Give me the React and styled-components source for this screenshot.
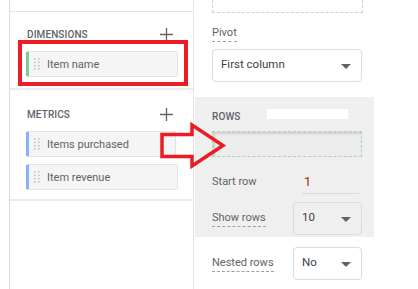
import React from 'react'
import styled, { createGlobalStyle } from "styled-components";

const GlobalStyle = createGlobalStyle`
  body {
    margin: 0;
    background: #fff;
    font-family: Roboto, "Noto Sans", sans-serif;
  }
`;

export default function App() {
  return (
    <>
      <GlobalStyle />
      <Page>
        <LeftPanel>
          <TopStub />
          <Group>
            <GroupHead>
              <GroupTitle>Dimensions</GroupTitle>
              <PlusIcon />
            </GroupHead>
            <Chip accent="#81c995">
              <Grip />
              Item name
            </Chip>
          </Group>
          <Group tall>
            <GroupHead>
              <GroupTitle>Metrics</GroupTitle>
              <PlusIcon />
            </GroupHead>
            <Chip accent="#8ab4f8" width={150}>
              <Grip />
              Items purchased
            </Chip>
            <Chip accent="#8ab4f8">
              <Grip />
              Item revenue
            </Chip>
          </Group>
        </LeftPanel>

        <RightPanel>
          <CutBox />
          <Field>
            <Label dashed>Pivot</Label>
            <Select width={150}>
              First column
              <Caret />
            </Select>
          </Field>

          <GrayBlock>
            <RowsHead>
              <GroupTitle>Rows</GroupTitle>
              <Redact />
            </RowsHead>
            <DropZone />
            <InlineRow>
              <Label>Start row</Label>
              <NumberInput>1</NumberInput>
            </InlineRow>
            <InlineRow select>
              <Label dashed>Show rows</Label>
              <Select width={69}>
                10
                <Caret />
              </Select>
            </InlineRow>
          </GrayBlock>

          <InlineRow select pad>
            <Label dashed>Nested rows</Label>
            <Select width={69}>
              No
              <Caret />
            </Select>
          </InlineRow>
        </RightPanel>

        <Annotations width="418" height="289" viewBox="0 0 418 289">
          <rect x="20" y="42" width="166" height="42" fill="none" stroke="#ec1c24" strokeWidth="4" />
          <polygon
            points="162,134.5 192,134.5 192,125 223,145.5 192,166 192,156.5 162,156.5"
            fill="none"
            stroke="#ec1c24"
            strokeWidth="3.5"
          />
        </Annotations>
      </Page>
    </>
  )
}

function Grip() {
  return (
    <GripSvg width="6" height="12" viewBox="0 0 6 12">
      {[1, 4.5, 8, 11].map((y) =>
        [1, 5].map((x) => <rect key={x + "-" + y} x={x - 1} y={y - 1} width="1.6" height="1.6" fill="#c4c4c4" />)
      )}
    </GripSvg>
  );
}

function PlusIcon() {
  return (
    <svg width="13" height="13" viewBox="0 0 13 13">
      <path d="M6.5 0 V13 M0 6.5 H13" stroke="#5f6368" strokeWidth="1.3" />
    </svg>
  );
}

function Caret() {
  return (
    <CaretSvg width="10" height="5" viewBox="0 0 10 5">
      <path d="M0 0 L10 0 L5 5 Z" fill="#5f6368" />
    </CaretSvg>
  );
}

const Page = styled.div`
  position: relative;
  width: 418px;
  height: 289px;
  overflow: hidden;
  display: flex;
`;

const Annotations = styled.svg`
  position: absolute;
  left: 0;
  top: 0;
  pointer-events: none;
`;

const LeftPanel = styled.div`
  margin-left: 9px;
  width: 183px;
  height: 100%;
  border-left: 1px solid #dcdcdc;
  border-right: 1px solid #e4e4e4;
  display: flex;
  flex-direction: column;
`;

const TopStub = styled.div`
  height: 11px;
  border-bottom: 1px solid #e4e4e4;
`;

const Group = styled.div`
  height: ${(p) => (p.tall ? "111px" : "78px")};
  padding: ${(p) => (p.tall ? "18px" : "16px")} 0 0 16px;
  box-sizing: border-box;
  border-bottom: 2px solid #ececec;
  display: flex;
  flex-direction: column;
  gap: 7px;
`;

const GroupHead = styled.div`
  display: flex;
  align-items: center;
  justify-content: space-between;
  width: 146px;
  height: 12px;
  margin-left: 1px;
  margin-bottom: 4px;
`;

const GroupTitle = styled.span`
  font-size: 10px;
  font-weight: 500;
  text-transform: uppercase;
  color: #5f6368;
  letter-spacing: 0.1px;
`;

const Chip = styled.div`
  width: ${(p) => p.width || 152}px;
  height: 26px;
  box-sizing: border-box;
  background: #f5f5f5;
  border: 1px solid #e2e2e2;
  border-left: 3px solid ${(p) => p.accent};
  border-radius: 2px;
  display: flex;
  align-items: center;
  padding-left: 5px;
  gap: 7px;
  font-size: 11px;
  color: #5f6368;
`;

const GripSvg = styled.svg`
  flex: none;
`;

const RightPanel = styled.div`
  flex: 1;
  display: flex;
  flex-direction: column;
  margin-left: 1px;
`;

const CutBox = styled.div`
  width: 151px;
  height: 13px;
  margin-left: 17px;
  box-sizing: border-box;
  border: 1px dashed #d0d0d0;
  border-top: none;
  margin-bottom: 13px;
`;

const Field = styled.div`
  display: flex;
  flex-direction: column;
  padding-left: 17px;
  gap: 7px;
  height: 71px;
`;

const Label = styled.span`
  font-size: 11px;
  color: #5f6368;
  padding-bottom: 2px;
  align-self: ${(p) => (p.dashed ? "flex-start" : "auto")};
  border-bottom: ${(p) => (p.dashed ? "1px dashed #9aa0a6" : "1px solid transparent")};
`;

const Select = styled.div`
  width: ${(p) => p.width}px;
  height: 33px;
  box-sizing: border-box;
  border: 1px solid #dadce0;
  border-radius: 4px;
  background: transparent;
  display: flex;
  align-items: center;
  justify-content: space-between;
  padding: 0 10px 3px 8px;
  font-size: 11.5px;
  color: #3c4043;
`;

const CaretSvg = styled.svg`
  flex: none;
  margin-top: 4px;
`;

const GrayBlock = styled.div`
  width: 179px;
  height: 140px;
  background: #efefef;
  padding: 13px 0 0 17px;
  box-sizing: border-box;
  display: flex;
  flex-direction: column;
`;

const RowsHead = styled.div`
  display: flex;
  align-items: center;
  height: 12px;
  gap: 27px;
`;

const Redact = styled.div`
  width: 81px;
  height: 10px;
  background: #fff;
  margin-top: -5px;
`;

const DropZone = styled.div`
  width: 150px;
  height: 26px;
  margin-top: 9px;
  box-sizing: border-box;
  border: 1px dashed #a8d5b0;
  background: #ececec;
  box-shadow: inset 2px 2px 2px #d0d0d0;
`;

const InlineRow = styled.div`
  display: flex;
  align-items: center;
  width: 150px;
  height: ${(p) => (p.select ? "33px" : "auto")};
  margin-top: ${(p) => (p.select ? "8px" : "14px")};
  padding-left: ${(p) => (p.pad ? "17px" : "0")};
  justify-content: space-between;
  ${(p) => p.pad && "margin-top: 10px;"}

  & > span {
    align-self: center;
  }
`;

const NumberInput = styled.div`
  width: 57px;
  box-sizing: border-box;
  padding: 0 0 4px 2px;
  margin-right: 3px;
  margin-top: 3px;
  border-bottom: 1px solid #d9d9d9;
  font-size: 13px;
  color: #b3261e;
`;
